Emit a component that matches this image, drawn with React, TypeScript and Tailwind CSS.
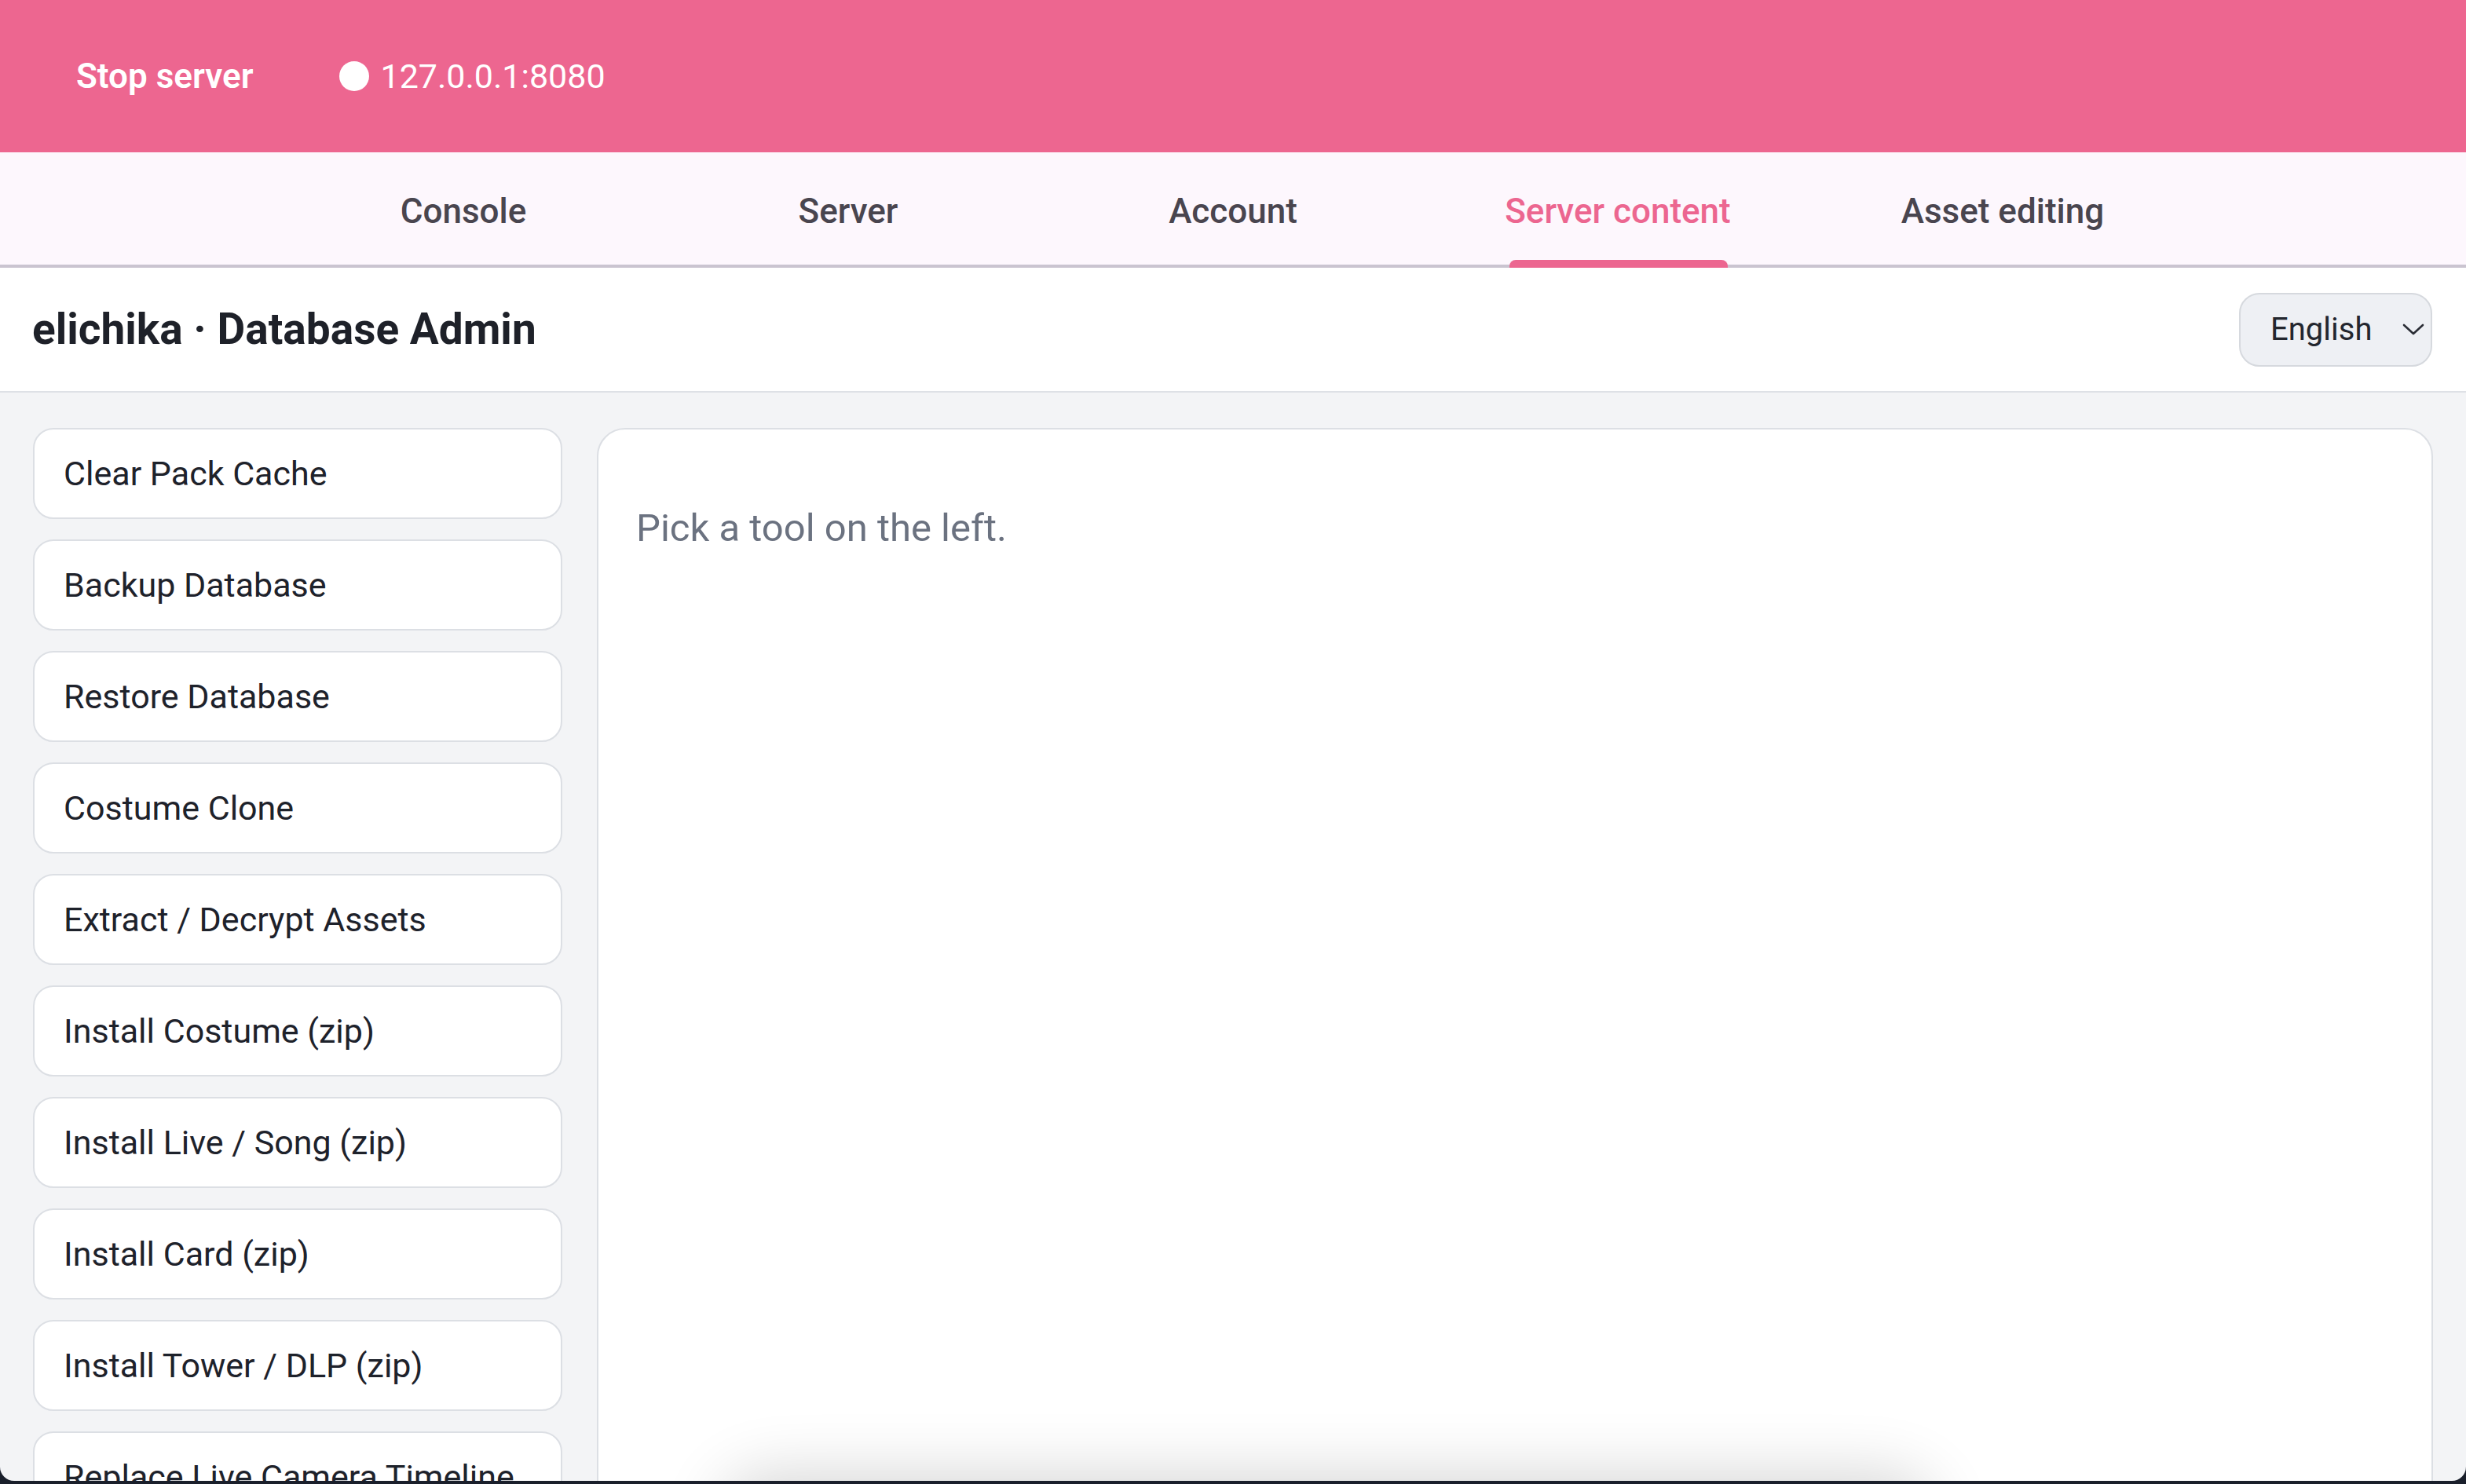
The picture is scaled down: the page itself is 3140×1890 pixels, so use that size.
import React, { useState } from "react";

const tabs = ["Console", "Server", "Account", "Server content", "Asset editing"];

const tools = [
    "Clear Pack Cache",
    "Backup Database",
    "Restore Database",
    "Costume Clone",
    "Extract / Decrypt Assets",
    "Install Costume (zip)",
    "Install Live / Song (zip)",
    "Install Card (zip)",
    "Install Tower / DLP (zip)",
    "Replace Live Camera Timeline",
];

const ChevronDown = () => (
    <svg width="28" height="16" viewBox="0 0 28 16" fill="none">
        <path d="M2 2L14 13L26 2" stroke="#2a2d35" strokeWidth="2.6" strokeLinecap="round" strokeLinejoin="round" />
    </svg>
);

const App: React.FC = () => {
    const [active, setActive] = useState<number>(3);

    return (
        <div className="w-[3140px] h-[1890px] bg-[#1a1f2b] font-['Roboto',sans-serif]">
            <div className="relative flex flex-col h-[1886px] overflow-hidden rounded-b-[18px] bg-[#f3f4f6]">
                {/* top bar */}
                <div className="flex items-center h-[194px] shrink-0 bg-[#ed6690] pl-[97px] text-white">
                    <span className="text-[44px] font-semibold">Stop server</span>
                    <div className="flex items-center ml-[110px]">
                        <span className="w-[38px] h-[38px] rounded-full bg-white" />
                        <span className="ml-[14px] text-[43px]">127.0.0.1:8080</span>
                    </div>
                </div>

                {/* tabs */}
                <div className="flex justify-center h-[147px] shrink-0 bg-[#fdf7fd] border-b-[4px] border-[#cac4d0]">
                    {tabs.map((t, i) => (
                        <button
                            key={t}
                            onClick={() => setActive(i)}
                            className="relative flex justify-center items-center w-[490px] h-full">
                            <span className={`relative flex items-center h-full pt-[6px] text-[44px] font-medium ${i === active ? "text-[#ec6690]" : "text-[#49454f]"}`}>
                                {t}
                                {i === active && (
                                    <span className="absolute left-[6px] right-[4px] bottom-[-4px] h-[10px] rounded-t-[8px] bg-[#ec6690]" />
                                )}
                            </span>
                        </button>
                    ))}
                </div>

                {/* title row */}
                <div className="flex items-center justify-between h-[159px] shrink-0 bg-white border-b-2 border-[#dee1e6] pl-[41px] pr-[43px]">
                    <h1 className="text-[55px] font-bold text-[#1e2129]">elichika · Database Admin</h1>
                    <div className="flex items-center justify-between w-[246px] h-[94px] rounded-[26px] bg-[#eef0f4] border-2 border-[#d6d9de] pl-[38px] pr-[8px]">
                        <span className="text-[40px] text-[#23262e]">English</span>
                        <ChevronDown />
                    </div>
                </div>

                {/* body */}
                <div className="flex flex-1 gap-[44px] pt-[45px] pl-[42px] pr-[42px] min-h-0">
                    <div className="flex flex-col gap-[26px] w-[674px] shrink-0">
                        {tools.map((t) => (
                            <button
                                key={t}
                                className="flex items-center shrink-0 h-[116px] rounded-[26px] bg-white border-2 border-[#dcdfe4] pl-[37px] text-left text-[43px] text-[#1e222b]">
                                {t}
                            </button>
                        ))}
                    </div>
                    <div className="flex-1 h-[1500px] rounded-[36px] bg-white border-2 border-[#dcdfe4] pl-[48px] pt-[89px]">
                        <p className="text-[49px] leading-[1.5] text-[#6b7280]">Pick a tool on the left.</p>
                    </div>
                </div>

                {/* shadow of a sheet just below the viewport */}
                <div className="absolute left-[940px] top-[1900px] w-[1500px] h-[80px] rounded-[40px] bg-white shadow-[0_0_80px_24px_rgba(0,0,0,0.16)]" />
            </div>
        </div>
    );
};

export default App;
